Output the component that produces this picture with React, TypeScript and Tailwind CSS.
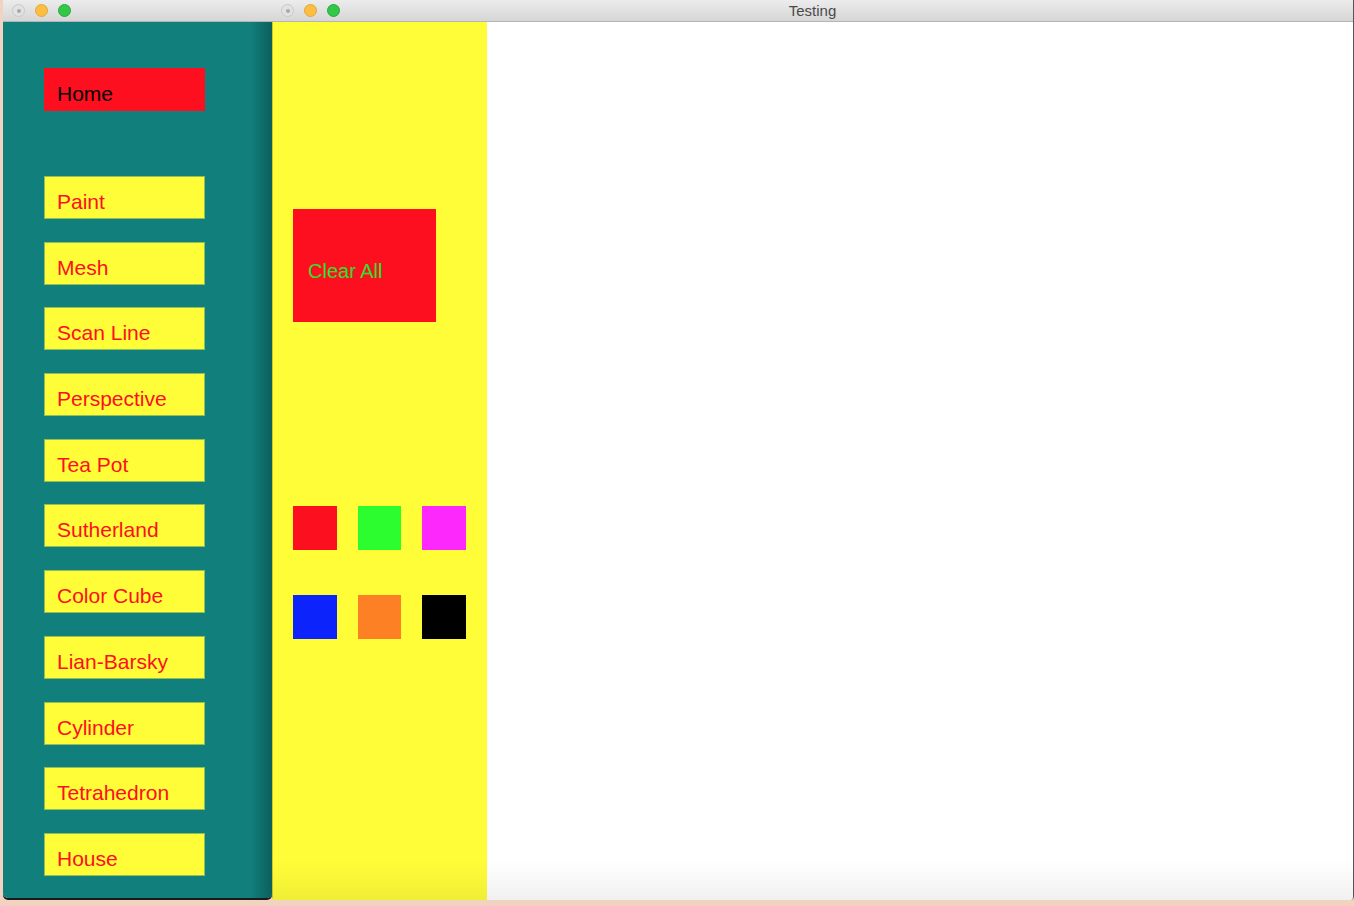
import React from 'react';

const MENU = [
  'Paint',
  'Mesh',
  'Scan Line',
  'Perspective',
  'Tea Pot',
  'Sutherland',
  'Color Cube',
  'Lian-Barsky',
  'Cylinder',
  'Tetrahedron',
  'House',
];

const SWATCHES = [
  'bg-[#fc0f1f]',
  'bg-[#2cfd2e]',
  'bg-[#fd28fc]',
  'bg-[#0c24fb]',
  'bg-[#fd8025]',
  'bg-[#000000]',
];

const Lights = () => (
  <div className="flex items-center gap-[10px] pl-[9px]">
    <span className="flex h-[13px] w-[13px] items-center justify-center rounded-full border border-[#c9c9c9] bg-[#e2e2e2]">
      <span className="h-[4px] w-[4px] rounded-full bg-[#a8a8a8]" />
    </span>
    <span className="h-[13px] w-[13px] rounded-full border border-[#e0a83a] bg-[#fdbd41]" />
    <span className="h-[13px] w-[13px] rounded-full border border-[#2aa83a] bg-[#33c748]" />
  </div>
);

const TitleBar = ({ title }: { title?: string }) => (
  <div className="relative flex h-[22px] shrink-0 items-center border-b border-[#b5b5b5] bg-gradient-to-b from-[#ececec] to-[#d6d6d6]">
    <Lights />
    {title && (
      <span className="absolute inset-x-0 text-center text-[15px] leading-[22px] text-[#4a4a4a]">
        {title}
      </span>
    )}
  </div>
);

const App = () => {
  return (
    <div
      className="flex h-[906px] w-[1354px] items-start overflow-hidden bg-[#f2d3c1]"
      style={{ fontFamily: '"Liberation Sans", Arial, sans-serif' }}
    >
      {/* left window */}
      <div className="ml-[3px] flex h-[898px] w-[269px] shrink-0 flex-col overflow-hidden rounded-b-[5px] shadow-[0_2px_0_#1a1a1a]">
        <TitleBar />
        <div className="flex flex-1 flex-col bg-[#117f7c] bg-[linear-gradient(to_right,transparent_92%,#0b5f5c)] pl-[41px] pt-[46px]">
          <div className="h-[43px] w-[161px] bg-[#fd0f1f] pl-[13px] pt-[14px] text-[21px] leading-[24px] text-black">
            Home
          </div>
          <div className="mt-[65px] flex flex-col gap-[22.7px]">
            {MENU.map(item => (
              <div
                key={item}
                className="h-[43px] w-[161px] border border-[#8fbf58] bg-[#fffd38] pl-[12px] pt-[13px] text-[21px] leading-[24px] text-[#fd0f1f]"
              >
                {item}
              </div>
            ))}
          </div>
        </div>
      </div>

      {/* right window */}
      <div className="relative flex h-[900px] flex-1 flex-col overflow-hidden rounded-b-[4px] border-r border-[#555]">
        <TitleBar title="Testing" />
        <div className="flex flex-1">
          <div className="flex w-[215px] flex-col border-l border-[#c9c92a] bg-[#fffd38] pl-[20px] pt-[187px]">
            <div className="h-[113px] w-[143px] bg-[#fd0f1f] pl-[15px] pt-[50px] text-[20px] leading-[24px] text-[#2ee02e]">
              Clear All
            </div>
            <div className="mt-[184px] grid w-[173px] grid-cols-[44px_43px_44px] justify-between gap-y-[45px]">
              {SWATCHES.map(c => (
                <div key={c} className={`h-[44px] ${c}`} />
              ))}
            </div>
          </div>
          <div className="flex-1 bg-white" />
        </div>
        <div className="pointer-events-none absolute inset-x-0 bottom-0 h-[40px] bg-gradient-to-b from-transparent to-[rgba(0,0,0,0.06)]" />
      </div>
    </div>
  );
};

export default App;
